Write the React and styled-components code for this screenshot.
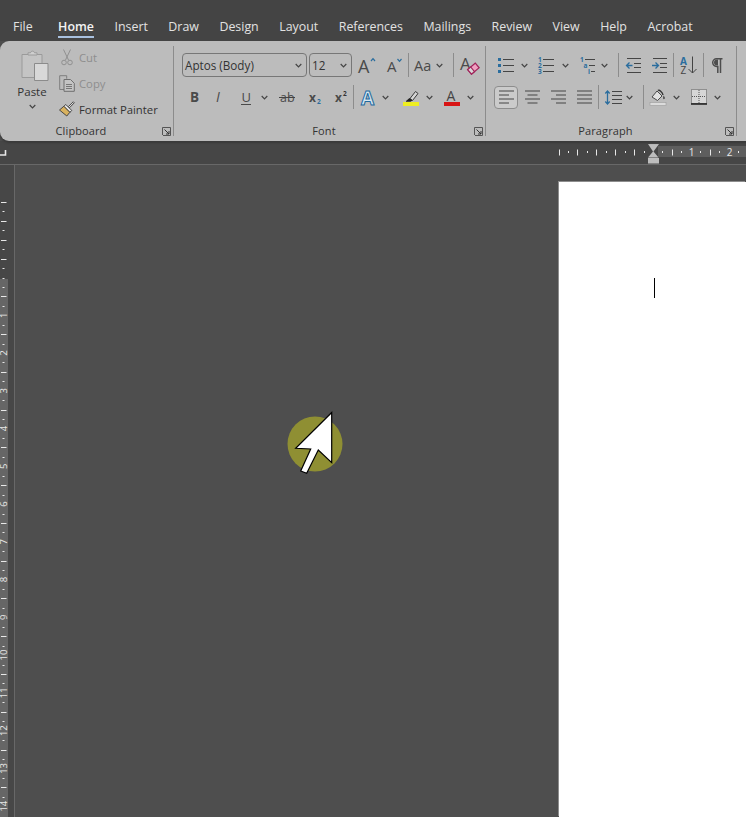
import React from "react";
import styled, { createGlobalStyle } from "styled-components";

const Global = createGlobalStyle`
  html, body { margin: 0; padding: 0; background: #4e4e4e; overflow: hidden; }
  #root { width: 746px; height: 817px; }
  svg { overflow: visible; }
`;

const FONT = `"Open Sans", "Noto Sans", sans-serif`;
const MUTED = "#8e8e8e";
const BLUE = "#2a6d9e";

const Window = styled.div`
  position: relative;
  width: 746px;
  height: 817px;
  display: flex;
  flex-direction: column;
  overflow: hidden;
  font-family: ${FONT};
  background: #4e4e4e;
`;

const TabBar = styled.nav`
  height: 41px;
  flex: none;
  display: flex;
  gap: 20.5px;
  padding-left: 13px;
  background: #444444;
`;

const Tab = styled.div`
  height: 38px;
  line-height: 53px;
  margin-right: ${(p) => p.$mr || 0}px;
  font-size: 12.4px;
  font-weight: ${(p) => (p.$active ? 600 : 400)};
  color: ${(p) => (p.$active ? "#f4f4f4" : "#e2e2e2")};
  white-space: nowrap;
  border-bottom: ${(p) => (p.$active ? "2px solid #a9c0de" : "2px solid transparent")};
  box-sizing: border-box;
`;

const Ribbon = styled.section`
  height: 100px;
  flex: none;
  display: flex;
  align-items: flex-start;
  padding-top: 5px;
  box-sizing: border-box;
  width: 760px;
  background: #bcbcbc;
  border-radius: 9px;
  box-shadow: 0 2px 2px #3a3a3a;
  position: relative;
  z-index: 1;
`;

const Group = styled.div`
  width: ${(p) => p.$w}px;
  height: 90px;
  flex: none;
  box-sizing: border-box;
  border-right: 1px solid #8c8c8c;
  display: flex;
  flex-direction: column;
`;

const GroupBody = styled.div`
  flex: 1;
  min-height: 0;
  display: flex;
  flex-direction: ${(p) => (p.$row ? "row" : "column")};
  gap: ${(p) => (p.$row ? 0 : 8)}px;
  padding-top: ${(p) => p.$pt}px;
  padding-left: ${(p) => p.$pl}px;
`;

const Footer = styled.div`
  height: 13px;
  flex: none;
  display: flex;
  align-items: flex-start;
  padding-right: 2px;
`;

const GroupName = styled.div`
  flex: 1;
  text-align: center;
  font-size: 11px;
  line-height: 15px;
  letter-spacing: 0.1px;
  color: #333;
`;

const Launcher = styled.svg`
  width: 9px;
  height: 9px;
  flex: none;
  margin-top: 4px;
`;

const Row = styled.div`
  height: 24px;
  flex: none;
  display: flex;
  align-items: center;
`;

const Tool = styled.span`
  display: flex;
  align-items: center;
  justify-content: center;
  flex: none;
  margin-left: ${(p) => p.$ml || 0}px;
`;

const Selected = styled(Tool)`
  width: 24px;
  height: 23px;
  box-sizing: border-box;
  border: 1px solid #8d8d8d;
  border-radius: 4px;
  background: #cbcbcb;
`;

const Sep = styled.span`
  width: 1px;
  height: 24px;
  flex: none;
  background: #8c8c8c;
  margin-left: ${(p) => p.$ml || 0}px;
`;

const Combo = styled.div`
  width: ${(p) => p.$w}px;
  height: 24px;
  flex: none;
  box-sizing: border-box;
  margin-left: ${(p) => p.$ml || 0}px;
  padding: 0 3px 0 2px;
  border: 1px solid #777;
  border-radius: 4px;
  display: flex;
  align-items: center;
  justify-content: space-between;
  font-size: 11.7px;
  color: #333;
`;

const PasteColumn = styled.div`
  width: 28px;
  margin-left: 18px;
  display: flex;
  flex-direction: column;
  align-items: center;
`;

const PasteGraphic = styled.div`
  padding-left: 6px;
  line-height: 0;
`;

const PasteLabel = styled.div`
  margin-top: 3px;
  font-size: 11.5px;
  line-height: 16px;
  color: #333;
`;

const PasteChevron = styled.div`
  margin-top: 3px;
  line-height: 0;
`;

const ClipStack = styled.div`
  margin-left: 13px;
  margin-top: -6px;
  display: flex;
  flex-direction: column;
`;

const ClipRow = styled.div`
  height: 26px;
  flex: none;
  display: flex;
  align-items: center;
  gap: 4px;
  font-size: 11.3px;
  color: ${(p) => (p.$off ? MUTED : "#333")};
  white-space: nowrap;
`;

const IconCell = styled.span`
  width: 16px;
  display: flex;
  justify-content: center;
  flex: none;
`;

const RulerStrip = styled.div`
  height: 23px;
  flex: none;
  background: #464646;
  border-bottom: 1px solid #686868;
`;

const RulerDrawing = styled.svg`
  display: block;
  width: 746px;
  height: 23px;
`;

const Workspace = styled.div`
  flex: 1;
  min-height: 0;
  display: flex;
`;

const VRuler = styled.svg`
  display: block;
  width: 15px;
  height: 652px;
  flex: none;
`;

const Canvas = styled.main`
  flex: 1;
  min-width: 0;
  padding: 17px 0 0 544px;
  background: #4e4e4e;
  display: flex;
`;

const Page = styled.div`
  flex: 1;
  background: #fff;
  box-shadow: -1px -1px 0 #8d8d8d;
  padding: 96px 0 0 95px;
`;

const Caret = styled.div`
  width: 1px;
  height: 20px;
  background: #000;
`;

const Pointer = styled.svg`
  position: absolute;
  left: 280px;
  top: 405px;
  width: 70px;
  height: 75px;
`;

/* ---- icons ---- */

const Chevron = ({ color = "#444" }) => (
  <svg width="9" height="5" viewBox="0 0 9 5">
    <path d="M1.700 1l2.800 2.800L7.300 1" fill="none" stroke={color} strokeWidth="1.200" />
  </svg>
);

const LauncherIcon = () => (
  <Launcher viewBox="0 0 9 9">
    <path d="M.5 8V.5H8.500M8.500.5V8.500H1" fill="none" stroke="#555" strokeWidth="1" />
    <path d="M2.500 2.500L7 7M7 4v3H4" fill="none" stroke="#333" strokeWidth="1" />
  </Launcher>
);

const PasteIcon = () => (
  <svg width="28" height="31" viewBox="0 0 28 31">
    <path d="M1 4.500h20v23H1z" fill="#c4c4c4" stroke="#9a9a9a" />
    <path d="M7 5V2.800h2.500c.5-2.200 3.500-2.200 4 0H16V5z" fill="#cfcfcf" stroke="#9a9a9a" />
    <path d="M13.500 13.500h13.500v17H13.500z" fill="#d8d8d8" stroke="#8b8b8b" />
  </svg>
);

const ScissorsIcon = () => (
  <svg width="12" height="17" viewBox="0 0 12 17">
    <g fill="none" stroke="#909090" strokeWidth="1">
      <path d="M2.500 .5l5 10.500M9.500 .5l-5 10.500" />
      <circle cx="3" cy="13.500" r="2.300" />
      <circle cx="9" cy="13.500" r="2.300" />
    </g>
  </svg>
);

const CopyIcon = () => (
  <svg width="16" height="17" viewBox="0 0 16 17">
    <path d="M6 14.500H.7V.7h7v3" fill="none" stroke="#7f7f7f" />
    <path d="M5 4.500h6.500l3.800 3.800v8H5z" fill="#c4c4c4" stroke="#6f6f6f" />
    <path d="M7 9.500h6M7 11.500h6M7 13.500h6" stroke="#777" />
  </svg>
);

const BrushIcon = () => (
  <svg width="16" height="16" viewBox="0 0 16 16">
    <path d="M9.500 5.500L14.300.8l1 1-4.700 4.800z" fill="#e4e4e4" stroke="#3b3b3b" strokeWidth=".9" />
    <path d="M6.800 3.500l6 6-2 1.800-6-6z" fill="#e6e6e6" stroke="#3b3b3b" strokeWidth=".9" />
    <path d="M4.800 5.300l6 6-3 3.700L.5 9z" fill="#d9b25f" stroke="#3b3b3b" strokeWidth=".9" />
  </svg>
);

const Glyph = ({ w, h, size, weight = 400, style = "normal", fill = "#4a4a4a", x, y, children, extra }) => (
  <svg width={w} height={h} viewBox={`0 0 ${w} ${h}`}>
    <text x={x} y={y} fontFamily={FONT} fontSize={size} fontWeight={weight} fontStyle={style} fill={fill}>
      {children}
    </text>
    {extra}
  </svg>
);

const GrowIcon = () => (
  <Glyph w={16} h={18} size={18} x={-1} y={17} extra={<path d="M12 5l2-2.400L16 5" fill="none" stroke={BLUE} strokeWidth="1.200" />}>
    A
  </Glyph>
);
const ShrinkIcon = () => (
  <Glyph w={15} h={16} size={15} x={0} y={15} extra={<path d="M10.500 2l2 2.400 2-2.400" fill="none" stroke={BLUE} strokeWidth="1.200" />}>
    A
  </Glyph>
);
const CaseIcon = () => (
  <Glyph w={19} h={16} size={14.500} x={0} y={14}>
    Aa
  </Glyph>
);
const ClearIcon = () => (
  <Glyph
    w={18}
    h={20}
    size={17}
    x={0}
    y={15}
    extra={
      <g transform="rotate(-40 13 14)">
        <rect x="8.500" y="11" width="10" height="6" fill="#f0a0c0" stroke="#a0235a" strokeWidth="1.200" />
        <rect x="8.500" y="11" width="4" height="6" fill="#d8d8d8" stroke="#a0235a" strokeWidth="1.200" />
      </g>
    }
  >
    A
  </Glyph>
);
const UnderlineIcon = () => (
  <Glyph w={10} h={15} size={13} x={0.500} y={12} extra={<path d="M0 14.500h10" stroke="#4a4a4a" />}>
    U
  </Glyph>
);
const StrikeIcon = () => (
  <Glyph w={16} h={14} size={12.500} x={1} y={12} extra={<path d="M0 7.500h16" stroke="#444" />}>
    ab
  </Glyph>
);
const ScriptIcon = ({ sup }) => (
  <svg width="12" height="14" viewBox="0 0 12 14">
    <text x="0" y="11.500" fontFamily={FONT} fontSize="12" fontWeight="700" fill="#4a4a4a">x</text>
    <text x="8" y={sup ? 5.500 : 13.500} fontFamily={FONT} fontSize="6.500" fontWeight="700" fill={sup ? "#333" : BLUE}>2</text>
  </svg>
);
const TextEffectIcon = () => (
  <svg width="16" height="17" viewBox="0 0 16 17">
    <text x="0" y="15.500" fontFamily={FONT} fontSize="19" fontWeight="700" fill="#d6e7f2" stroke="#1f6aa0" strokeWidth="1">A</text>
  </svg>
);
const HighlightIcon = () => (
  <svg width="16" height="17" viewBox="0 0 16 17">
    <path d="M7 9.500L12.500 2.500l2.500 2L9.500 11.500z" fill="#d6d6d6" stroke="#3a3a3a" />
    <path d="M3 12l3.500-3 3 2.500-2 1.300H3z" fill="#222" />
    <rect x="0" y="13" width="16" height="4" fill="#eeee22" />
  </svg>
);
const FontColorIcon = () => (
  <svg width="16" height="17" viewBox="0 0 16 17">
    <text x="2.500" y="11.500" fontFamily={FONT} fontSize="14" fill="#444">A</text>
    <rect x="0" y="13" width="16" height="4" fill="#d81414" />
  </svg>
);

const Lines = ({ x = 5, w = 10, ys = [2.500, 8.500, 14.500] }) => (
  <path d={ys.map((y) => `M${x} ${y}h${w}`).join("")} stroke="#454545" strokeWidth="1" fill="none" />
);

const BulletsIcon = () => (
  <svg width="16" height="17" viewBox="0 0 16 17">
    <path d="M0 1h3v3H0zM0 7h3v3H0zM0 13h3v3H0z" fill={BLUE} />
    <Lines x={5} w={11} />
  </svg>
);

const Mini = ({ x, y, children }) => (
  <text x={x} y={y} fontFamily={FONT} fontSize="6.500" fontWeight="700" fill={BLUE}>
    {children}
  </text>
);

const NumberedIcon = () => (
  <svg width="16" height="17" viewBox="0 0 16 17">
    <Mini x={0} y={5}>1</Mini>
    <Mini x={0} y={11}>2</Mini>
    <Mini x={0} y={17}>3</Mini>
    <Lines x={5} w={11} />
  </svg>
);

const MultiIcon = () => (
  <svg width="16" height="17" viewBox="0 0 16 17">
    <Mini x={0} y={5}>1</Mini>
    <Mini x={3.500} y={11}>a</Mini>
    <Mini x={8} y={17}>i</Mini>
    <path d="M5 2.500h10M9 8.500h6M11 14.500h4" stroke="#454545" />
  </svg>
);

const IndentIcon = ({ flip }) => (
  <svg width="15" height="15" viewBox="0 0 15 15">
    <path d="M1 .500h14M8 5.500h7M8 9.500h7M1 14.500h14" stroke="#454545" />
    {flip ? (
      <path d="M0 7.500h6M3.500 4.500l3 3-3 3" fill="none" stroke={BLUE} strokeWidth="1.300" />
    ) : (
      <path d="M6.500 7.500H.8M3.500 4.500l-3 3 3 3" fill="none" stroke={BLUE} strokeWidth="1.300" />
    )}
  </svg>
);

const SortIcon = () => (
  <svg width="17" height="18" viewBox="0 0 17 18">
    <text x="0" y="8.500" fontFamily={FONT} fontSize="10" fontWeight="700" fill={BLUE}>A</text>
    <text x="0.500" y="18" fontFamily={FONT} fontSize="10" fill="#444">Z</text>
    <path d="M12.500 .5v16.500M8.500 13l4 4 4-4" fill="none" stroke="#444" />
  </svg>
);

const PilcrowIcon = () => (
  <svg width="11" height="15" viewBox="0 0 11 15">
    <path d="M10.500.8H4.500a3.700 3.700 0 000 7.600h1.300V15M8.500 .8V15" fill="none" stroke="#4d4d4d" strokeWidth="1.500" />
    <path d="M5 1.500h1v6H5a3 3 0 010-6z" fill="#4d4d4d" />
  </svg>
);

const AlignIcon = ({ kind }) => {
  const rows = {
    left: [[0, 15], [0, 10], [0, 15], [0, 10]],
    center: [[0, 15], [2.500, 10], [0, 15], [2.500, 10]],
    right: [[0, 15], [5, 10], [0, 15], [5, 10]],
    justify: [[0, 15], [0, 15], [0, 15], [0, 15]],
  }[kind];
  return (
    <svg width="15" height="14" viewBox="0 0 15 14">
      {rows.map(([x, w], i) => (
        <path key={i} d={`M${x} ${1 + i * 4}h${w}`} stroke="#454545" />
      ))}
    </svg>
  );
};

const SpacingIcon = () => (
  <svg width="17" height="15" viewBox="0 0 17 15">
    <path d="M2.500 1v13M.3 3.500L2.500 1l2.200 2.500M.3 11.500L2.500 14l2.200-2.500" fill="none" stroke={BLUE} strokeWidth="1.300" />
    <path d="M7 1.500h10M7 5.500h10M7 9.500h10M7 13.500h10" stroke="#454545" />
  </svg>
);

const ShadingIcon = () => (
  <svg width="17" height="17" viewBox="0 0 17 17">
    <path d="M2 8l5-6 5 5-4.500 4.500z" fill="#e2e2e2" stroke="#4a4a4a" />
    <path d="M8 1.500c1-1.200 4.500 1.500 5 4.500" fill="none" stroke="#333" strokeWidth="1.400" />
    <path d="M13.500 6.500c1.500 2 1.800 3 .8 3.600-1 .4-1.600-.6-.8-3.600z" fill="#444" />
    <rect x="0" y="13.500" width="16" height="3" fill="#dcdcdc" stroke="#9b9b9b" strokeWidth=".6" />
  </svg>
);

const BordersIcon = () => (
  <svg width="16" height="16" viewBox="0 0 16 16">
    <rect x=".5" y=".5" width="15" height="14" fill="#d6d6d6" stroke="#555" strokeDasharray="1 1" />
    <path d="M8 1v13M1 7.500h14" stroke="#555" strokeDasharray="1 1" />
    <path d="M0 15h16" stroke="#111" strokeWidth="1.400" />
  </svg>
);

/* ---- rulers ---- */

const range = (a, b) => Array.from({ length: b - a + 1 }, (_, i) => a + i);

const HorizontalRuler = () => {
  const step = 9.44;
  const origin = 653;
  return (
    <RulerDrawing viewBox="0 0 746 23">
      <rect x="658" y="5" width="88" height="11" fill="#5e5e5e" />
      <path d="M0 14h5.500V9" fill="none" stroke="#e8e8e8" strokeWidth="1.600" />
      {range(-10, 9).map((k) => {
        if (k === 0) return null;
        const x = Math.round(origin + k * step) + 0.5;
        if (k > 0 && k % 4 === 0)
          return (
            <text key={k} x={x} y="14.500" textAnchor="middle" fontFamily={FONT} fontSize="10" fill="#e8e8e8">
              {k / 4}
            </text>
          );
        return k % 2 === 0 ? (
          <path key={k} d={`M${x} 8.500v6`} stroke="#e8e8e8" />
        ) : (
          <path key={k} d={`M${x} 10v2`} stroke="#e8e8e8" />
        );
      })}
      <path d="M648 3h11l-5.500 7.500 5 6h-10.500l5-6z" fill="#bdbdbd" />
      <rect x="648" y="17" width="11" height="5.500" fill="#bdbdbd" />
    </RulerDrawing>
  );
};

const VerticalRuler = () => {
  const step = 9.44;
  const origin = 277.5 - 165;
  return (
    <VRuler viewBox="0 0 15 652">
      <rect x="0" y="0" width="14" height="652" fill="#474747" />
      <rect x="14" y="0" width="1" height="652" fill="#686868" />
      <rect x="0" y="114" width="8" height="538" fill="#666666" />
      {range(-8, 56).map((k) => {
        const y = Math.round(origin + k * step) + 0.5;
        if (k > 0 && k % 4 === 0) {
          const c = origin + k * step;
          return (
            <text
              key={k}
              x="4"
              y={c}
              transform={`rotate(-90 4 ${c})`}
              textAnchor="middle"
              dominantBaseline="central"
              fontFamily={FONT}
              fontSize="9.500"
              fill="#e8e8e8"
            >
              {k / 4}
            </text>
          );
        }
        return k % 2 === 0 && k !== 0 ? (
          <path key={k} d={`M1 ${y}h5.500`} stroke="#e8e8e8" />
        ) : (
          <path key={k} d={`M2.500 ${y}h2`} stroke="#e8e8e8" />
        );
      })}
    </VRuler>
  );
};

const TABS = ["Insert", "Draw", "Design", "Layout", "References", "Mailings", "Review", "View", "Help", "Acrobat"];

export default function App() {
  return (
    <Window>
      <Global />
      <TabBar>
        <Tab $mr={5}>File</Tab>
        <Tab $active>Home</Tab>
        {TABS.map((t) => (
          <Tab key={t}>{t}</Tab>
        ))}
      </TabBar>

      <Ribbon>
        <Group $w={174}>
          <GroupBody $row $pt={4} $pl={0}>
            <PasteColumn>
              <PasteGraphic>
                <PasteIcon />
              </PasteGraphic>
              <PasteLabel>Paste</PasteLabel>
              <PasteChevron>
                <Chevron />
              </PasteChevron>
            </PasteColumn>
            <ClipStack>
              <ClipRow $off>
                <IconCell><ScissorsIcon /></IconCell>
                Cut
              </ClipRow>
              <ClipRow $off>
                <IconCell><CopyIcon /></IconCell>
                Copy
              </ClipRow>
              <ClipRow>
                <IconCell><BrushIcon /></IconCell>
                Format Painter
              </ClipRow>
            </ClipStack>
          </GroupBody>
          <Footer>
            <GroupName>Clipboard</GroupName>
            <LauncherIcon />
          </Footer>
        </Group>

        <Group $w={312}>
          <GroupBody $pt={7} $pl={8}>
            <Row>
              <Combo $w={125}>
                Aptos (Body)
                <Chevron />
              </Combo>
              <Combo $w={43} $ml={2}>
                12
                <Chevron />
              </Combo>
              <Tool $ml={7}><GrowIcon /></Tool>
              <Tool $ml={12}><ShrinkIcon /></Tool>
              <Sep $ml={6} />
              <Tool $ml={5}><CaseIcon /></Tool>
              <Tool $ml={2}><Chevron /></Tool>
              <Sep $ml={9} />
              <Tool $ml={6}><ClearIcon /></Tool>
            </Row>
            <Row>
              <Tool $ml={8}>
                <Glyph w={9} h={14} size={13.500} weight={700} x={0} y={12}>B</Glyph>
              </Tool>
              <Tool $ml={17}>
                <Glyph w={8} h={14} size={14} style="italic" x={0} y={12}>I</Glyph>
              </Tool>
              <Tool $ml={17}><UnderlineIcon /></Tool>
              <Tool $ml={9}><Chevron /></Tool>
              <Tool $ml={10}><StrikeIcon /></Tool>
              <Tool $ml={14}><ScriptIcon /></Tool>
              <Tool $ml={14}><ScriptIcon sup /></Tool>
              <Sep $ml={6} />
              <Tool $ml={7}><TextEffectIcon /></Tool>
              <Tool $ml={4}><Chevron /></Tool>
              <Tool $ml={13}><HighlightIcon /></Tool>
              <Tool $ml={6}><Chevron /></Tool>
              <Tool $ml={10}><FontColorIcon /></Tool>
              <Tool $ml={6}><Chevron /></Tool>
            </Row>
          </GroupBody>
          <Footer>
            <GroupName>Font</GroupName>
            <LauncherIcon />
          </Footer>
        </Group>

        <Group $w={251}>
          <GroupBody $pt={7} $pl={8}>
            <Row>
              <Tool $ml={4}><BulletsIcon /></Tool>
              <Tool $ml={6}><Chevron /></Tool>
              <Tool $ml={9}><NumberedIcon /></Tool>
              <Tool $ml={7}><Chevron /></Tool>
              <Tool $ml={10}><MultiIcon /></Tool>
              <Tool $ml={4}><Chevron /></Tool>
              <Sep $ml={9} />
              <Tool $ml={7}><IndentIcon /></Tool>
              <Tool $ml={11}><IndentIcon flip /></Tool>
              <Sep $ml={6} />
              <Tool $ml={6}><SortIcon /></Tool>
              <Sep $ml={6} />
              <Tool $ml={8}><PilcrowIcon /></Tool>
            </Row>
            <Row>
              <Selected><AlignIcon kind="left" /></Selected>
              <Tool $ml={7}><AlignIcon kind="center" /></Tool>
              <Tool $ml={11}><AlignIcon kind="right" /></Tool>
              <Tool $ml={11}><AlignIcon kind="justify" /></Tool>
              <Sep $ml={6} />
              <Tool $ml={6}><SpacingIcon /></Tool>
              <Tool $ml={3}><Chevron /></Tool>
              <Sep $ml={9} />
              <Tool $ml={6}><ShadingIcon /></Tool>
              <Tool $ml={5}><Chevron /></Tool>
              <Tool $ml={10}><BordersIcon /></Tool>
              <Tool $ml={6}><Chevron /></Tool>
            </Row>
          </GroupBody>
          <Footer>
            <GroupName>Paragraph</GroupName>
            <LauncherIcon />
          </Footer>
        </Group>
      </Ribbon>

      <RulerStrip>
        <HorizontalRuler />
      </RulerStrip>

      <Workspace>
        <VerticalRuler />
        <Canvas>
          <Page>
            <Caret />
          </Page>
        </Canvas>
      </Workspace>

      <Pointer viewBox="0 0 70 75">
        <circle cx="35" cy="39" r="27.500" fill="#8f8f33" />
        <path
          d="M51.700 7.500V57.700L38.300 45 26.700 68.300 20.700 66 30.700 44 15.700 43.300z"
          fill="#fff"
          stroke="#000"
          strokeWidth="1.200"
          strokeLinejoin="miter"
        />
      </Pointer>
    </Window>
  );
}
